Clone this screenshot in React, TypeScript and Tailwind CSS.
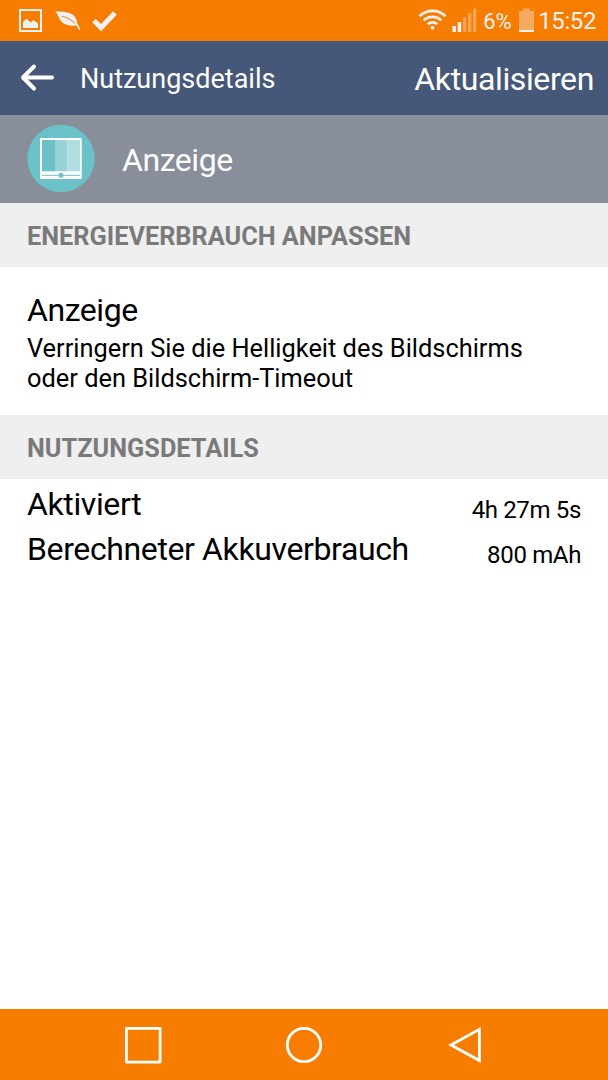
import type { ReactNode } from 'react';

interface UsageRowProps {
  label: string;
  value: string;
}

function StatusBar() {
  return (
    <div className="flex h-[41px] items-center justify-between bg-[#f77d00] text-[#f1f1f1]">
      <svg width="130" height="41" viewBox="0 0 130 41" aria-label="Benachrichtigungen">
        <path d="M20 10h21v21H20z" fill="none" stroke="currentColor" strokeWidth="2" />
        <path d="M23 28v-6l3.500-3.500 4 4 3-2.500 4.500 3.500V28z" fill="currentColor" />
        <path
          d="M55 11.300c5.500.7 11-.2 16.500 2.700 4 2.200 5.500 5.500 5.600 9.200 1.300 1.800 2.400 3.900 3.100 6.500l-1.400.2c-.7-2.100-1.500-3.400-2.700-4.500-5.200.7-10.500.2-14.200-3.300-3.300-3-3.200-7.300-6.900-10.800z"
          fill="currentColor"
        />
        <path d="M62 16.300c4.500.8 9.500 3.400 13 7.200" fill="none" stroke="#f77d00" strokeWidth="1" />
        <path d="M94 20.500l7 7.200 14-14.700" fill="none" stroke="currentColor" strokeWidth="5" />
      </svg>
      <div className="flex h-full items-center pr-[12px]">
        <svg width="60" height="41" viewBox="418 0 60 41" aria-label="WLAN und Mobilfunk">
          <g fill="none" stroke="currentColor" strokeWidth="2.700">
            <path d="M419.500 16.200a18.500 18.500 0 0 1 26 0" />
            <path d="M423.700 20.400a12.500 12.500 0 0 1 17.600 0" />
            <path d="M427.800 24.400a6.700 6.700 0 0 1 9.400 0" />
          </g>
          <circle cx="432.500" cy="27.700" r="1.900" fill="currentColor" />
          <path d="M452.500 26h3.500v6h-3.500zM457.700 22h3.500v10h-3.500z" fill="currentColor" />
          <path d="M463 17.500h3.300V32H463zM468 13h3.300v19H468zM473 8.500h3.300V32H473z" fill="currentColor" opacity=".35" />
        </svg>
        <span className="ml-[5px] w-[35px] pt-px text-[22px] leading-[41px] tracking-[-0.2px]">6%</span>
        <svg width="17" height="41" viewBox="0 0 17 41" aria-label="Akku">
          <path d="M5 8.500h7V11h4v19H1V11h4z" fill="currentColor" opacity=".4" />
          <path d="M1 30h15v2H1z" fill="currentColor" />
        </svg>
        <span className="ml-[3px] pt-[2px] text-[24px] leading-[41px] tracking-[-0.4px]">15:52</span>
      </div>
    </div>
  );
}

function DisplayIcon() {
  return (
    <svg width="68" height="68" viewBox="0 0 68 68">
      <circle cx="34" cy="33.500" r="33.700" fill="#6ac1c7" />
      <path d="M13 13h41.700v41H13z" fill="#fff" />
      <path d="M15 15h13v31.300H15z" fill="#6ac1c7" />
      <path d="M28 15h12.500v31.300H28z" fill="#95d3d6" />
      <path d="M40.500 15H53v31.300H40.500z" fill="#b0dddd" />
      <path d="M15 50.300h38" stroke="#6ac1c7" strokeWidth="1" />
      <circle cx="34" cy="50.300" r="2.500" fill="#6ac1c7" />
    </svg>
  );
}

function SectionHeader({ children }: { children: ReactNode }) {
  return (
    <h2 className="h-16 bg-[#efefef] pl-[27px] text-[25.300px] leading-[68px] font-bold text-[#7a7a7a]">
      {children}
    </h2>
  );
}

function UsageRow({ label, value }: UsageRowProps) {
  return (
    <div className="flex h-[44.500px] justify-between px-[27px]">
      <span className="text-[32px] leading-[42px] tracking-[-0.38px]">{label}</span>
      <span className="pt-[5px] text-[24px] leading-[44px] tracking-[-0.35px]">{value}</span>
    </div>
  );
}

function NavigationBar() {
  return (
    <nav className="flex h-[71px] items-center justify-between bg-[#f77d00] pr-[126px] pl-[124px] text-white">
      <button aria-label="Letzte Apps">
        <svg width="38" height="38" viewBox="0 0 38 38" fill="none" stroke="currentColor" strokeWidth="2.800">
          <path d="M2.400 2.400h33.700v33.700H2.400z" strokeLinejoin="round" />
        </svg>
      </button>
      <button aria-label="Startseite">
        <svg width="38" height="38" viewBox="0 0 38 38" fill="none" stroke="currentColor" strokeWidth="2.800">
          <circle cx="18" cy="19" r="16.700" />
        </svg>
      </button>
      <button aria-label="Zurück">
        <svg width="34" height="38" viewBox="0 0 34 38" fill="none" stroke="currentColor" strokeWidth="2.800">
          <path d="M31.400 3.300v31.300L3 19z" />
        </svg>
      </button>
    </nav>
  );
}

export default function App() {
  return (
    <div className="flex h-[1080px] w-[608px] flex-col overflow-hidden bg-white font-['Roboto',sans-serif] text-black">
      <StatusBar />

      {/* Title bar */}
      <header className="flex h-[74px] items-center bg-[#465879] pr-[14px] pl-[20px] text-white">
        <button aria-label="Zurück">
          <svg width="36" height="30" viewBox="0 0 36 30" fill="none" stroke="currentColor" strokeWidth="4">
            <path d="M14 3.500L3 14.500l11 11M3.500 14.500H32" strokeLinecap="round" strokeLinejoin="round" />
          </svg>
        </button>
        <h1 className="ml-[24px] flex-1 pt-[2px] text-[27px]">Nutzungsdetails</h1>
        <button className="pt-[2px] text-[32px] tracking-[-0.38px]">Aktualisieren</button>
      </header>

      <div className="flex h-[88px] items-center gap-[27px] bg-[#888e9a] pl-[27px] text-[32px] text-white">
        <DisplayIcon />
        <span className="pt-[2px] tracking-[-0.45px]">Anzeige</span>
      </div>

      <main className="flex-1">
        <SectionHeader>ENERGIEVERBRAUCH ANPASSEN</SectionHeader>
        <div className="h-[148px] px-[27px] pt-6">
          <h3 className="text-[32px] leading-[38px] tracking-[-0.45px]">Anzeige</h3>
          <p className="mt-1 w-[530px] text-[25.400px] leading-[30px]">
            Verringern Sie die Helligkeit des Bildschirms oder den Bildschirm-Timeout
          </p>
        </div>

        <SectionHeader>NUTZUNGSDETAILS</SectionHeader>
        <div className="pt-1">
          <UsageRow label="Aktiviert" value="4h 27m 5s" />
          <UsageRow label="Berechneter Akkuverbrauch" value="800 mAh" />
        </div>
      </main>

      <NavigationBar />
    </div>
  );
}
